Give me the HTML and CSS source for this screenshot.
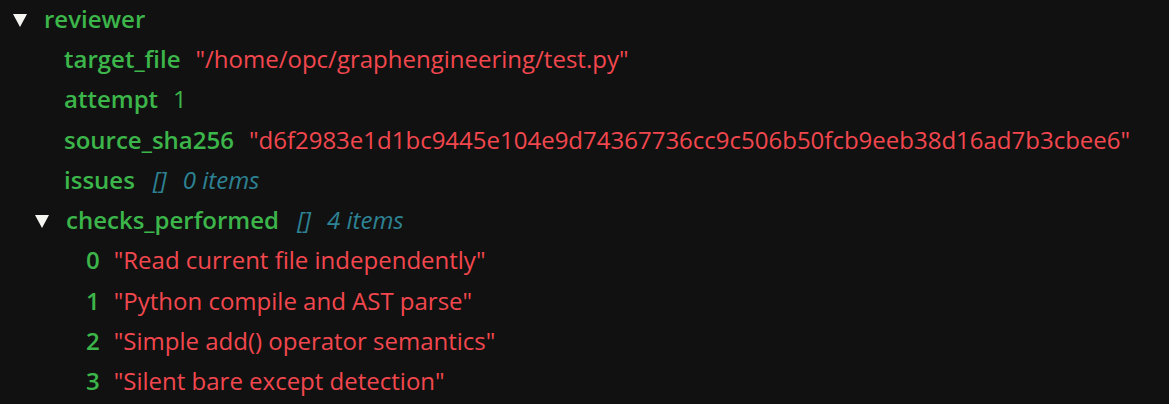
FILE: index.html
```html
<!DOCTYPE html>
<html>
<head>
<meta charset="utf-8">
<link rel="stylesheet" href="styles.css">
</head>
<body>
<div class="tree">
  <div class="row root">
    <span class="caret"></span><span class="key">reviewer</span>
  </div>
  <div class="children">
    <div class="row"><span class="key">target_file</span><span class="str">"/home/opc/graphengineering/test.py"</span></div>
    <div class="row"><span class="key">attempt</span><span class="num">1</span></div>
    <div class="row"><span class="key">source_sha256</span><span class="str">"d6f2983e1d1bc9445e104e9d74367736cc9c506b50fcb9eeb38d16ad7b3cbee6"</span></div>
    <div class="row"><span class="key">issues</span><span class="meta"><span class="br">[]</span>0 items</span></div>
    <div class="row nested"><span class="caret"></span><span class="key">checks_performed</span><span class="meta"><span class="br">[]</span>4 items</span></div>
    <div class="items">
      <div class="row"><span class="idx">0</span><span class="str">"Read current file independently"</span></div>
      <div class="row"><span class="idx">1</span><span class="str">"Python compile and AST parse"</span></div>
      <div class="row"><span class="idx">2</span><span class="str">"Simple add() operator semantics"</span></div>
      <div class="row"><span class="idx">3</span><span class="str">"Silent bare except detection"</span></div>
    </div>
  </div>
</div>
</body>
</html>
```

FILE: styles.css
```css
html, body {
  margin: 0;
  padding: 0;
  background: #111111;
}
body {
  font-family: "Open Sans", "Noto Sans", sans-serif;
  font-size: 24px;
  color: #3cb54a;
}
.tree {
  margin-top: -2px;
}
.row {
  display: flex;
  align-items: center;
  height: 40.3px;
  white-space: nowrap;
}
.root {
  padding-left: 13px;
}
.caret {
  width: 0;
  height: 0;
  border-left: 7.5px solid transparent;
  border-right: 7.5px solid transparent;
  border-top: 13px solid #f4f4f0;
  margin-right: 17px;
  margin-top: 4px;
}
.key {
  font-weight: 600;
  color: #3cb54a;
  margin-right: 15px;
}
.children {
  padding-left: 64px;
}
.nested {
  margin-left: -29px;
}
.str {
  color: #f2474e;
}
.num {
  color: #3cb54a;
}
.meta {
  font-style: italic;
  color: #2d8293;
  margin-left: 3px;
}
.br {
  margin-right: 16px;
}
.items {
  padding-left: 22px;
}
.idx {
  color: #3cb54a;
  font-weight: 600;
  margin-right: 14px;
}
```
